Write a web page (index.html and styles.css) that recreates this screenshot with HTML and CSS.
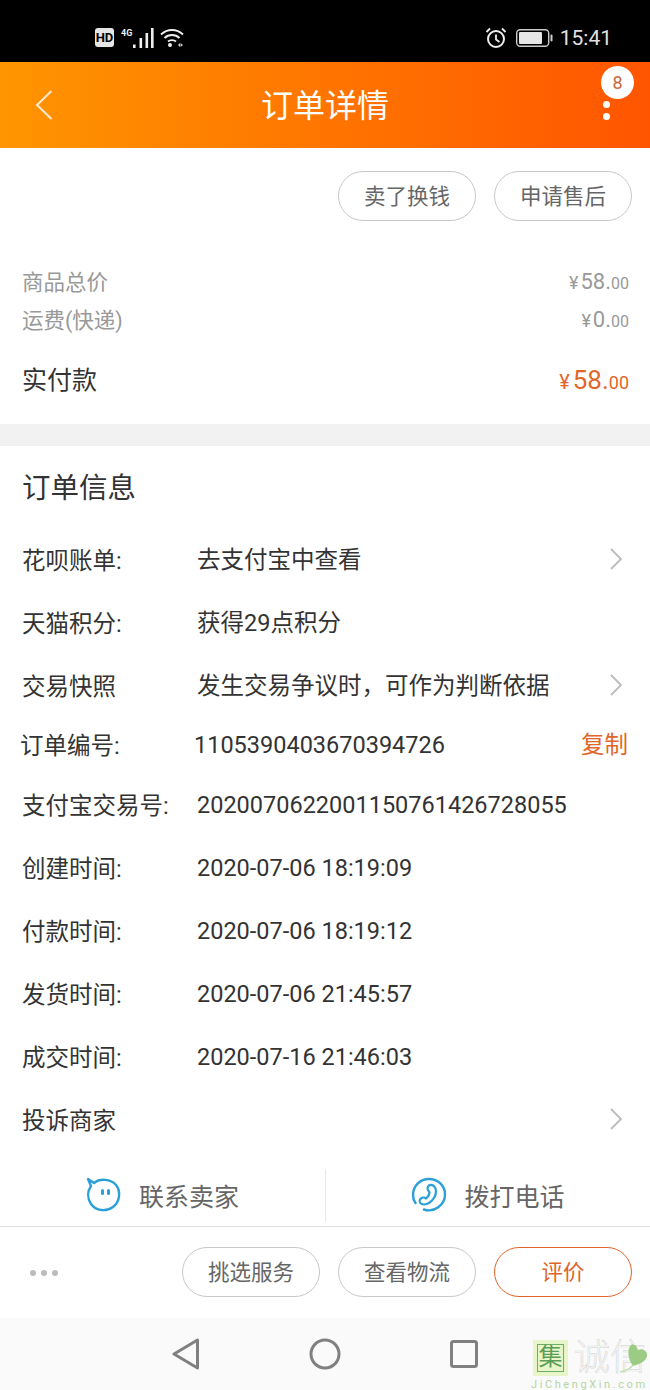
FILE: index.html
```html
<!DOCTYPE html>
<html lang="zh-CN">
  <head>
    <title>订单详情</title>
    <meta charset="utf-8" />
    <link rel="stylesheet" href="styles.css">
  </head>

  <body>
    <div class="status-bar">
      <div class="status-left">
        <span class="hd">HD</span>
        <span class="net">4G</span>
        <svg class="signal" width="21" height="20" viewBox="0 0 21 20">
          <rect x="0" y="16.500" width="2.600" height="3.500" fill="#eee" />
          <rect x="6.500" y="10" width="2.600" height="10" fill="#eee" />
          <rect x="12.500" y="5" width="2.600" height="15" fill="#eee" />
          <rect x="18" y="0" width="2.600" height="20" fill="#eee" />
        </svg>
        <svg class="wifi" width="24" height="21" viewBox="0 0 24 21">
          <path d="M1 7.500C7 1.500 17 1.500 23 7.500M4.500 11C8.500 7 15.500 7 19.500 11M8 14.500C10 12.700 14 12.700 16 14.500" fill="none" stroke="#eee" stroke-width="1.800" />
          <circle cx="10" cy="18" r="2" fill="#eee" />
          <path d="M18 18l2-2v4zM20.500 16l2.500 2-2.500 2z" fill="#ccc" />
        </svg>
      </div>
      <div class="status-right">
        <svg width="22" height="22" viewBox="0 0 22 22">
          <circle cx="11" cy="12" r="8" fill="none" stroke="#eee" stroke-width="2" />
          <path d="M11 7.500V12.500L14.500 15M1.500 5L5 1.500M20.500 5L17 1.500" fill="none" stroke="#eee" stroke-width="1.800" />
        </svg>
        <svg class="battery" width="38" height="18" viewBox="0 0 38 18">
          <rect x="0.700" y="0.700" width="32" height="16.600" rx="3.500" fill="none" stroke="#ccc" stroke-width="1.400" />
          <rect x="3" y="3" width="23" height="12" rx="1" fill="#e6e6e6" />
          <rect x="34.500" y="5.500" width="2" height="7" rx="1" fill="#ccc" />
        </svg>
        <span class="clock">15:41</span>
      </div>
    </div>

    <header class="topbar">
      <svg class="back" width="18" height="30" viewBox="0 0 18 30">
        <path d="M16.500 1L2 15L16.500 29" fill="none" stroke="#ffe9d2" stroke-width="2" />
      </svg>
      <h1>订单详情</h1>
      <div class="more">
        <span class="badge">8</span>
        <span class="dot"></span>
        <span class="dot"></span>
      </div>
    </header>

    <div class="top-actions">
      <button class="pill">卖了换钱</button>
      <button class="pill">申请售后</button>
    </div>

    <section class="summary">
      <div class="sum-row">
        <span>商品总价</span>
        <span class="price"><small>¥</small><b>58.</b><i>00</i></span>
      </div>
      <div class="sum-row">
        <span>运费(快递)</span>
        <span class="price"><small>¥</small><b>0.</b><i>00</i></span>
      </div>
      <div class="sum-row total">
        <span>实付款</span>
        <span class="price"><small>¥</small><b>58.</b><i>00</i></span>
      </div>
    </section>

    <section class="info">
      <h2>订单信息</h2>
      <div class="row"><span class="key">花呗账单:</span><span class="val">去支付宝中查看</span>
        <svg class="chev" width="14" height="22" viewBox="0 0 14 22"><path d="M2 1l10 10L2 21" /></svg>
      </div>
      <div class="row"><span class="key">天猫积分:</span><span class="val">获得29点积分</span></div>
      <div class="row"><span class="key">交易快照</span><span class="val">发生交易争议时，可作为判断依据</span>
        <svg class="chev" width="14" height="22" viewBox="0 0 14 22"><path d="M2 1l10 10L2 21" /></svg>
      </div>
      <div class="row row-order"><span class="key">订单编号:</span><span class="val">1105390403670394726</span><span class="copy">复制</span></div>
      <div class="row"><span class="key">支付宝交易号:</span><span class="val">2020070622001150761426728055</span></div>
      <div class="row"><span class="key">创建时间:</span><span class="val">2020-07-06 18:19:09</span></div>
      <div class="row"><span class="key">付款时间:</span><span class="val">2020-07-06 18:19:12</span></div>
      <div class="row"><span class="key">发货时间:</span><span class="val">2020-07-06 21:45:57</span></div>
      <div class="row"><span class="key">成交时间:</span><span class="val">2020-07-16 21:46:03</span></div>
      <div class="row"><span class="key">投诉商家</span><span class="val"></span>
        <svg class="chev" width="14" height="22" viewBox="0 0 14 22"><path d="M2 1l10 10L2 21" /></svg>
      </div>
    </section>

    <div class="contact">
      <div class="contact-item">
        <svg width="36" height="36" viewBox="0 0 36 36">
          <path d="M8 6C14 1 25 2 30 8C35 14 34 25 27 30C20 35 10 34 5 27C1 21 1.500 14 5 9L2 2Z" fill="none" stroke="#2a9fd8" stroke-width="2.400" stroke-linejoin="round" />
          <rect x="15" y="12" width="3" height="6" rx="1.500" fill="#2a9fd8" />
          <rect x="21" y="12" width="3" height="6" rx="1.500" fill="#2a9fd8" />
        </svg>
        <span>联系卖家</span>
      </div>
      <div class="contact-item">
        <svg width="36" height="36" viewBox="0 0 36 36">
          <path d="M13 32.500C23 36 34 28 34 17.500C34 8.500 27 2 18 2C9 2 2 9 2 18C2 21 3 24 4.500 26" fill="none" stroke="#2a9fd8" stroke-width="2.400" stroke-linecap="round" />
          <path d="M18 8.500C20 7 23 8 24.500 11.500C26.500 18 21 26.500 13 27.500C9.500 27.500 7.500 25 9 22.500C10.500 20.500 13 20 15 21.500C17.500 19.500 18.500 17 18.500 15C16 13 16 10 18 8.500Z" fill="none" stroke="#2a9fd8" stroke-width="2.200" stroke-linejoin="round" />
        </svg>
        <span>拨打电话</span>
      </div>
    </div>

    <div class="actions">
      <div class="dots"><span></span><span></span><span></span></div>
      <button class="pill">挑选服务</button>
      <button class="pill">查看物流</button>
      <button class="pill pill-hot">评价</button>
    </div>

    <nav class="navbar">
      <svg width="28" height="32" viewBox="0 0 28 32">
        <path d="M25.500 2V30L2 16Z" fill="none" stroke="#808080" stroke-width="3" stroke-linejoin="round" />
      </svg>
      <svg width="32" height="32" viewBox="0 0 32 32">
        <circle cx="16" cy="16" r="14" fill="none" stroke="#808080" stroke-width="3" />
      </svg>
      <svg width="28" height="28" viewBox="0 0 28 28">
        <rect x="1.500" y="1.500" width="25" height="25" rx="2" fill="none" stroke="#808080" stroke-width="3" />
      </svg>
      <div class="watermark">
        <div class="wm-top">
          <span class="wm-box"><span class="wm-inner">集</span></span>
          <span class="wm-word">诚信</span>
        </div>
        <svg class="wm-heart" width="30" height="32" viewBox="0 0 30 32">
          <path d="M12 3C17 1 18 6 19 8C22 6 29 8 28 14C27 20 20 22 14 24C10 19 7 8 12 3Z" fill="#9ccb84" />
          <path d="M1 30C6 29 11 27 14 23" fill="none" stroke="#c4e0b0" stroke-width="1.500" />
        </svg>
        <div class="wm-url">JiChengXin.com</div>
      </div>
    </nav>
  </body>
</html>
```

FILE: styles.css
```css
* {
  box-sizing: border-box;
}

body {
  margin: 0;
  width: 650px;
  background: #fff;
  color: #333;
  font-family: Roboto, "Noto Sans CJK SC", sans-serif;
}

.status-bar {
  height: 62px;
  background: #000;
  display: flex;
  justify-content: space-between;
  align-items: center;
  padding: 13px 38px 0 95px;
}

.status-left,
.status-right {
  display: flex;
  align-items: center;
}

.hd {
  width: 19px;
  height: 19px;
  border-radius: 3px;
  background: #e6e6e6;
  color: #000;
  font-size: 13px;
  font-weight: 700;
  line-height: 19px;
  text-align: center;
}

.net {
  margin: -10px 0 0 7px;
  width: 12px;
  color: #eee;
  font-size: 9px;
  font-weight: 700;
}

.wifi {
  margin-left: 6px;
}

.battery {
  margin-left: 9px;
}

.clock {
  margin-left: 6px;
  color: #e0e0e0;
  font-size: 21px;
}

.topbar {
  height: 86px;
  background: linear-gradient(to right, #ff9500, #ff5500);
  display: flex;
  align-items: center;
  justify-content: space-between;
  padding: 0 40px 0 35px;
  position: relative;
}

.topbar h1 {
  margin: 0;
  color: #fff;
  font-size: 32px;
  font-weight: 400;
  position: absolute;
  left: 261px;
  line-height: 88px;
  top: 0;
}

.more {
  width: 7px;
  display: flex;
  flex-direction: column;
  gap: 5px;
  margin-top: 11px;
  position: relative;
}

.dot {
  width: 7px;
  height: 7px;
  border-radius: 50%;
  background: #fff;
}

.badge {
  position: absolute;
  left: -5px;
  top: -35px;
  width: 33px;
  height: 33px;
  margin-left: 3px;
  border-radius: 50%;
  background: #fff;
  color: #c8683a;
  font-size: 18px;
  line-height: 33px;
  text-align: center;
}

.top-actions {
  display: flex;
  justify-content: flex-end;
  gap: 18px;
  padding: 23px 18px 0 0;
  height: 108px;
}

.pill {
  width: 138px;
  height: 50px;
  border: 1px solid #c8c8c8;
  border-radius: 25px;
  background: #fff;
  color: #666;
  font-family: inherit;
  font-size: 21.500px;
  line-height: 30px;
  padding: 2px 0 0;
}

.pill-hot {
  border: 1.500px solid #e0642a;
  color: #e0642a;
}

.summary {
  height: 190px;
  padding: 8px 22px 0;
  border-bottom: 22px solid #f2f2f2;
}

.sum-row {
  display: flex;
  justify-content: space-between;
  align-items: center;
  height: 38px;
  color: #999;
  font-size: 21.500px;
  line-height: 30px;
}

.total {
  height: 56px;
  margin-top: 13px;
  color: #333;
  font-size: 25px;
}

.price {
  color: #999;
  margin-right: -1px;
}

.total .price {
  color: #e0662a;
}

.price small {
  font-size: 18px;
}

.price b {
  margin-left: 2px;
  font-size: 22px;
  font-weight: 400;
}

.price i {
  font-style: normal;
  font-size: 16px;
}

.total .price small {
  font-size: 20px;
}

.total .price b {
  margin-left: 3px;
  font-size: 26px;
}

.total .price i {
  font-size: 18px;
}

.info {
  padding: 0 22px;
  height: 718px;
}

.info h2 {
  margin: 0;
  height: 82px;
  color: #333;
  font-size: 28.500px;
  font-weight: 400;
  line-height: 85px;
}

.row {
  display: flex;
  align-items: center;
  height: 63px;
  color: #333;
  font-size: 23.500px;
  line-height: 30px;
}

.row-order {
  height: 56px;
  margin-left: -2px;
}

.key {
  width: 175px;
  padding-top: 2px;
  flex: none;
}

.row-order .key {
  width: 174px;
}

.val {
  flex: 1;
  white-space: nowrap;
}

.copy {
  color: #e0662a;
}

.chev {
  margin: 0 5px 2px 0;
}

.chev path {
  fill: none;
  stroke: #bbb;
  stroke-width: 1.800;
}

.contact {
  height: 63px;
  display: grid;
  grid-template-columns: 1fr 1fr;
  border-bottom: 1px solid #e0e0e0;
}

.contact-item {
  display: flex;
  align-items: center;
  justify-content: center;
  gap: 17px;
  padding-bottom: 1px;
  color: #666;
  font-size: 25px;
}

.contact-item + .contact-item {
  border-left: 1px solid #e8e8e8;
  margin: 5px 0 4px;
}

.actions {
  height: 91px;
  display: flex;
  align-items: center;
  justify-content: flex-end;
  gap: 18px;
  padding: 0 18px 1px 30px;
}

.dots {
  display: flex;
  gap: 5px;
  margin: 2px auto 0 0;
}

.dots span {
  width: 6px;
  height: 6px;
  border-radius: 50%;
  background: #bbb;
}

.navbar {
  height: 72px;
  background: #fafafa;
  display: flex;
  align-items: center;
  padding: 0 172px;
  justify-content: space-between;
  position: relative;
}

.watermark {
  position: absolute;
  left: 531px;
  top: 22px;
  width: 119px;
}

.wm-top {
  display: flex;
  align-items: center;
  gap: 6px;
  height: 36px;
}

.wm-box {
  flex: none;
  margin-left: 2px;
  width: 35px;
  height: 36px;
  padding: 4px;
  background: #e8f5c8;
}

.wm-inner {
  display: block;
  height: 100%;
  border: 1.500px solid #6fae68;
  color: #5c9e58;
  font-size: 24px;
  line-height: 25px;
  text-align: center;
}

.wm-word {
  color: #fcfcfc;
  font-size: 36px;
  font-weight: 300;
  line-height: 36px;
  white-space: nowrap;
  -webkit-text-stroke: 0.700px #dcdcdc;
}

.wm-heart {
  position: absolute;
  left: 88px;
  top: 2px;
}

.wm-url {
  margin-top: 2px;
  color: #b4d6a4;
  font-size: 11px;
  line-height: 13px;
  letter-spacing: 2.600px;
  white-space: nowrap;
}
```
